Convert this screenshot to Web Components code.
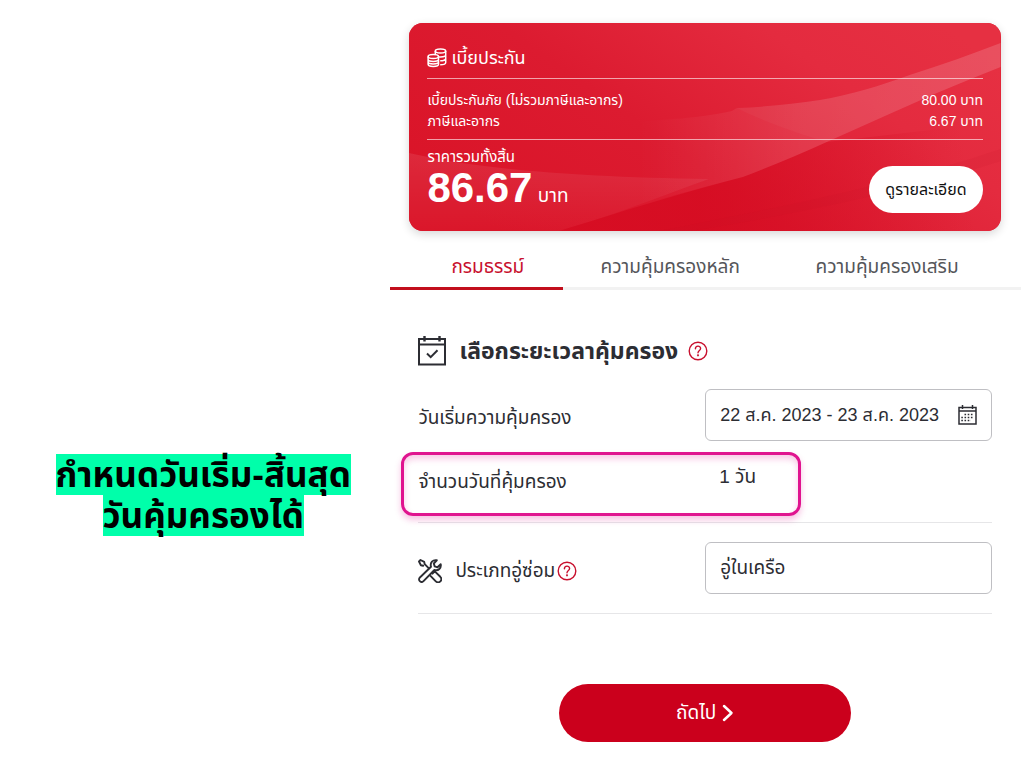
<!DOCTYPE html>
<html lang="th">
<head>
<meta charset="utf-8">
<meta name="viewport" content="width=device-width, initial-scale=1">
<title>เบี้ยประกัน</title>
<style>
  body { margin: 0; background: #fff; color: #2c2d33; font-family: "Liberation Sans", "Noto Sans Thai", sans-serif; font-size: 19px; line-height: 24px; }
</style>
</head>
<body>
<insurance-page></insurance-page>

<script>
const define = (name, html) => {
  const template = document.createElement('template');
  template.innerHTML = '<style>*{box-sizing:border-box}</style>' + html;
  customElements.define(name, class extends HTMLElement {
    constructor() {
      super();
      this.attachShadow({ mode: 'open' }).append(template.content.cloneNode(true));
    }
  });
};

define('help-button', `
  <style>
    :host { display: inline-flex; flex: none; }
    button { display: block; width: 20px; height: 20px; padding: 0; border: 0; background: none; color: #c8102e; }
    svg { display: block; }
  </style>
  <button type="button" aria-label="ช่วยเหลือ">
    <svg width="20" height="20" viewBox="0 0 20 20" fill="none" stroke="currentColor" stroke-width="1.4" stroke-linecap="round">
      <circle cx="10" cy="10" r="8.8"/>
      <path d="M7.4 7.8c0-3.5 5.2-3.5 5.2-.3 0 2-2.6 2-2.6 4.3"/>
      <circle cx="10" cy="14.3" r=".4" fill="currentColor"/>
    </svg>
  </button>`);

define('callout-note', `
  <style>
    :host { display: block; text-align: center; font-size: 35px; font-weight: 700; line-height: 41px; color: #000; }
    p { margin: 0; }
    ::slotted(span) { display: table; margin: 0 auto; background: #00ffaa; }
  </style>
  <p><slot></slot></p>`);

define('premium-row', `
  <style>:host { display: flex; justify-content: space-between; font-size: 14px; line-height: 21px; }</style>
  <span><slot></slot></span><span><slot name="amount"></slot></span>`);

define('premium-card', `
  <style>
    :host { display: block; position: relative; overflow: hidden; border-radius: 14px; padding: 19px 18px 18px; color: #fff; background: #dc1428; box-shadow: 0 3px 10px rgba(0,0,0,.16); }
    .art { position: absolute; inset: 0; width: 100%; height: 100%; }
    .body { position: relative; }
    h2 { display: flex; align-items: center; gap: 4px; margin: 0; height: 36px; padding-bottom: 4px; font-size: 18px; font-weight: 400; line-height: 32px; }
    .rows { border: solid rgba(255,255,255,.6); border-width: 1px 0; padding: 11px 0 7px; }
    .total { display: flex; justify-content: space-between; align-items: flex-end; padding-top: 6px; }
    .label { margin: 0; font-size: 15px; line-height: 22px; }
    .sum { margin: 0; line-height: 40px; height: 45px; }
    .sum strong { font-size: 42px; }
    button { height: 47px; width: 114px; padding: 0; border: 0; border-radius: 24px; background: #fff; color: #111; font: inherit; font-size: 16px; white-space: nowrap; }
  </style>
  <svg class="art" viewBox="0 0 592 208" preserveAspectRatio="none" aria-hidden="true">
    <defs>
      <linearGradient id="base" x1="0" y1=".7" x2="1" y2=".2">
        <stop offset="0" stop-color="#da1428"/><stop offset=".4" stop-color="#dc1b30"/><stop offset=".75" stop-color="#e42b3f"/><stop offset="1" stop-color="#e63042"/>
      </linearGradient>
      <linearGradient id="shine" gradientUnits="userSpaceOnUse" x1="230" y1="0" x2="592" y2="0">
        <stop offset="0" stop-color="#fff" stop-opacity="0"/><stop offset=".45" stop-color="#fff" stop-opacity=".1"/><stop offset="1" stop-color="#fff" stop-opacity=".13"/>
      </linearGradient>
      <linearGradient id="left" gradientUnits="userSpaceOnUse" x1="0" y1="130" x2="0" y2="208">
        <stop offset="0" stop-color="#fff" stop-opacity=".09"/><stop offset="1" stop-color="#fff" stop-opacity=".01"/>
      </linearGradient>
      <linearGradient id="deep" gradientUnits="userSpaceOnUse" x1="150" y1="208" x2="560" y2="150">
        <stop offset="0" stop-color="#d4081e" stop-opacity=".6"/><stop offset=".35" stop-color="#d4081e" stop-opacity=".7"/><stop offset="1" stop-color="#d4081e" stop-opacity="0"/>
      </linearGradient>
    </defs>
    <path fill="url(#base)" d="M0 0h592v208H0z"/>
    <path fill="url(#left)" d="M0 130c60 14 150 24 300 26-50 18-100 38-150 52H0z"/>
    <path fill="url(#deep)" d="M150 208c65-20 115-36 184-54 28-11 56-22 84-35l174-20v109z"/>
    <path fill="url(#shine)" d="M225 99c35-3 60-3 98-11l5-3c29-1 56-4 83-8 30-5 60-14 90-25 32-10 62-21 91-32v24c-30 12-60 24-91 38-28 12-55 25-83 37-28 13-56 24-84 35-35 9-70 18-109 30z"/>
    <path fill="#fff" fill-opacity=".03" d="M328 85c29-1 56-4 83-8 30-5 60-14 90-25 32-10 62-21 91-32v24c-30 12-60 24-91 38-28 12-55 25-83 37-40-12-70-24-90-34z"/>
    <path fill="#c8102a" fill-opacity=".1" d="M250 208c100-20 230-44 342-82v12c-90 30-220 56-310 70z"/>
  </svg>
  <div class="body">
    <h2>
      <svg width="20" height="20" viewBox="0 0 20 20" fill="none" stroke="currentColor" stroke-width="1.500">
        <ellipse cx="13.500" cy="2.900" rx="5.200" ry="2"/>
        <path d="M8.300 2.900v3.500M18.700 2.900v11.500c0 1.300-2.500 2.300-5.500 2.300M18.700 6.800c0 1.300-2.400 2.200-5.200 2.200-.8 0-1.600-.1-2.200-.2M18.700 10.600c0 1.300-2.500 2.300-5.500 2.200"/>
        <ellipse cx="6.300" cy="8.500" rx="5.200" ry="2"/>
        <path d="M1.100 8.500v7.800c0 1.300 2.300 2.200 5.200 2.200s5.200-.9 5.200-2.200V8.500M1.100 11.200c0 1.300 2.300 2.200 5.200 2.200s5.200-.9 5.200-2.200M1.100 13.800c0 1.300 2.300 2.200 5.200 2.200s5.200-.9 5.200-2.200"/>
      </svg>
      <span>เบี้ยประกัน</span>
    </h2>
    <div class="rows">
      <premium-row>เบี้ยประกันภัย (ไม่รวมภาษีและอากร)<span slot="amount">80.00 บาท</span></premium-row>
      <premium-row>ภาษีและอากร<span slot="amount">6.67 บาท</span></premium-row>
    </div>
    <div class="total">
      <div>
        <p class="label">ราคารวมทั้งสิ้น</p>
        <p class="sum"><strong>86.67</strong> บาท</p>
      </div>
      <button type="button">ดูรายละเอียด</button>
    </div>
  </div>`);

define('cover-tabs', `
  <style>
    :host { display: block; }
    nav { display: grid; grid-template-columns: 173fr 214fr 244fr; border-bottom: 3px solid #f2f2f2; }
    a { display: block; padding: 12px 0 8px; margin-bottom: -3px; border-bottom: 3px solid transparent; color: #55565a; text-align: center; text-decoration: none; white-space: nowrap; }
    a:last-child { padding-right: 24px; }
    a[aria-current] { color: #c8102e; border-color: #c20e1c; padding-left: 22px; }
  </style>
  <nav>
    <a href="#policy" aria-current="page">กรมธรรม์</a>
    <a href="#main">ความคุ้มครองหลัก</a>
    <a href="#extra">ความคุ้มครองเสริม</a>
  </nav>`);

define('form-row', `
  <style>
    :host { display: grid; grid-template-columns: 1fr 1fr; align-items: center; position: relative; }
    .label { display: flex; align-items: center; padding-top: 6px; }
  </style>
  <div class="label"><slot name="label"></slot></div>
  <div><slot></slot></div>
  <slot name="overlay"></slot>`);

define('cover-form', `
  <style>
    :host { display: block; }
    h3 { display: flex; align-items: center; gap: 10px; margin: 0 0 23px; font-size: 23px; line-height: 30px; }
    svg { display: block; flex: none; }
    h3 svg { margin-right: 3px; }
    label { white-space: nowrap; }
    .box { display: flex; align-items: center; height: 52px; border: 1px solid #bfbfc3; border-radius: 6px; padding: 0 14px; background: #fff; }
    input, select { flex: 1; min-width: 0; padding: 0; border: 0; outline: 0; appearance: none; background: none; color: inherit; font: inherit; height: 40px; }
    input { font-size: 18px; }
    .cal { padding: 0; border: 0; background: none; color: inherit; }
    .days { height: 82px; border-bottom: 1px solid #e6e6e8; padding-bottom: 6px; }
    output { display: block; padding-left: 14px; margin-bottom: 4px; }
    .ring { position: absolute; inset: 11px calc(100% / 3) 6px -17px; border: 3px solid #e0148f; border-radius: 12px; box-shadow: 0 4px 6px rgba(224,20,143,.25), inset 0 4px 6px rgba(224,20,143,.22); pointer-events: none; }
    .garage { padding: 19px 0; border-bottom: 1px solid #e6e6e8; }
    .tool { margin-right: 13px; }
    .garage label { margin-right: 2px; }
    .next { display: flex; align-items: center; justify-content: center; gap: 6px; width: 51%; height: 58px; margin: 70px auto 0; padding: 0; border: 0; border-radius: 29px; background: #cb001c; color: #fff; font: inherit; }
  </style>
  <form>
    <h3>
      <svg width="28" height="30" viewBox="0 0 28 30" fill="none" stroke="currentColor" stroke-width="2">
        <path d="M1 3h26v25.500H1zM1 8.500h26"/><path stroke-width="2.400" d="M6.500 0v5.500M21.500 0v5.500"/><path d="M9 17.500l3.700 3.700 6.800-7"/>
      </svg>
      <span>เลือกระยะเวลาคุ้มครอง</span>
      <help-button></help-button>
    </h3>
    <form-row>
      <label slot="label" for="date">วันเริ่มความคุ้มครอง</label>
      <div class="box">
        <input id="date" type="text" value="22 ส.ค. 2023 - 23 ส.ค. 2023">
        <button class="cal" type="button" aria-label="ปฏิทิน">
          <svg width="19" height="20" viewBox="0 0 19 20" fill="none" stroke="currentColor" stroke-width="1.500">
            <path d="M1 2.500h17v16.500H1zM1 6h17M4.500 0v4M14.500 0v4"/>
            <path stroke-width="1.600" stroke-dasharray="1.600 1.600" d="M6.500 9.500H16M3.300 12.500H16M3.300 15.500H13"/>
          </svg>
        </button>
      </div>
    </form-row>
    <form-row class="days">
      <label slot="label" for="days">จำนวนวันที่คุ้มครอง</label>
      <output id="days">1 วัน</output>
      <div slot="overlay" class="ring"></div>
    </form-row>
    <form-row class="garage">
      <svg slot="label" class="tool" width="24" height="24" viewBox="0 0 24 24" fill="none" stroke="currentColor" stroke-width="1.900" stroke-linejoin="round" stroke-linecap="round">
        <path d="M1 2.500 2.500 1l3.700 1.900.5 2.300 4.200 4.200M1 2.500l1.900 3.700 2.300.5"/>
        <path d="M14.500 14.700l2.300-2.300 5.500 5.400c3 3.100-1.400 7.600-4.500 4.500l-5.300-5.400"/>
        <path d="M18.800 1.300c-4-.8-7 2.400-5.800 6.400L1.900 18.500c-2.500 2.500 1.100 6.100 3.600 3.600L16.400 11c4 1.200 7.100-1.800 6.300-5.800l-3.200 3.100-2.800-.9-.9-2.900z"/>
      </svg>
      <label slot="label" for="garage">ประเภทอู่ซ่อม</label>
      <help-button slot="label"></help-button>
      <div class="box">
        <select id="garage"><option>อู่ในเครือ</option></select>
      </div>
    </form-row>
    <button class="next" type="button">
      <span>ถัดไป</span>
      <svg width="12" height="18" viewBox="0 0 12 18" fill="none" stroke="currentColor" stroke-width="2.500" stroke-linecap="round" stroke-linejoin="round"><path d="M2 2l7.500 7L2 16"/></svg>
    </button>
  </form>`);

define('insurance-page', `
  <style>
    :host { display: grid; grid-template-columns: 13fr 21fr; padding-right: 3px; }
    callout-note { margin: 454px 0 0 16px; }
    main { min-width: 0; padding: 23px 0 18px; }
    premium-card { margin: 0 20px 0 19px; }
    cover-tabs { margin-top: 12px; }
    cover-form { margin: 46px 29px 0 28px; }
  </style>
  <callout-note><span>กำหนดวันเริ่ม-สิ้นสุด</span><span>วันคุ้มครองได้</span></callout-note>
  <main>
    <premium-card></premium-card>
    <cover-tabs></cover-tabs>
    <cover-form></cover-form>
  </main>`);
</script>
</body>
</html>
